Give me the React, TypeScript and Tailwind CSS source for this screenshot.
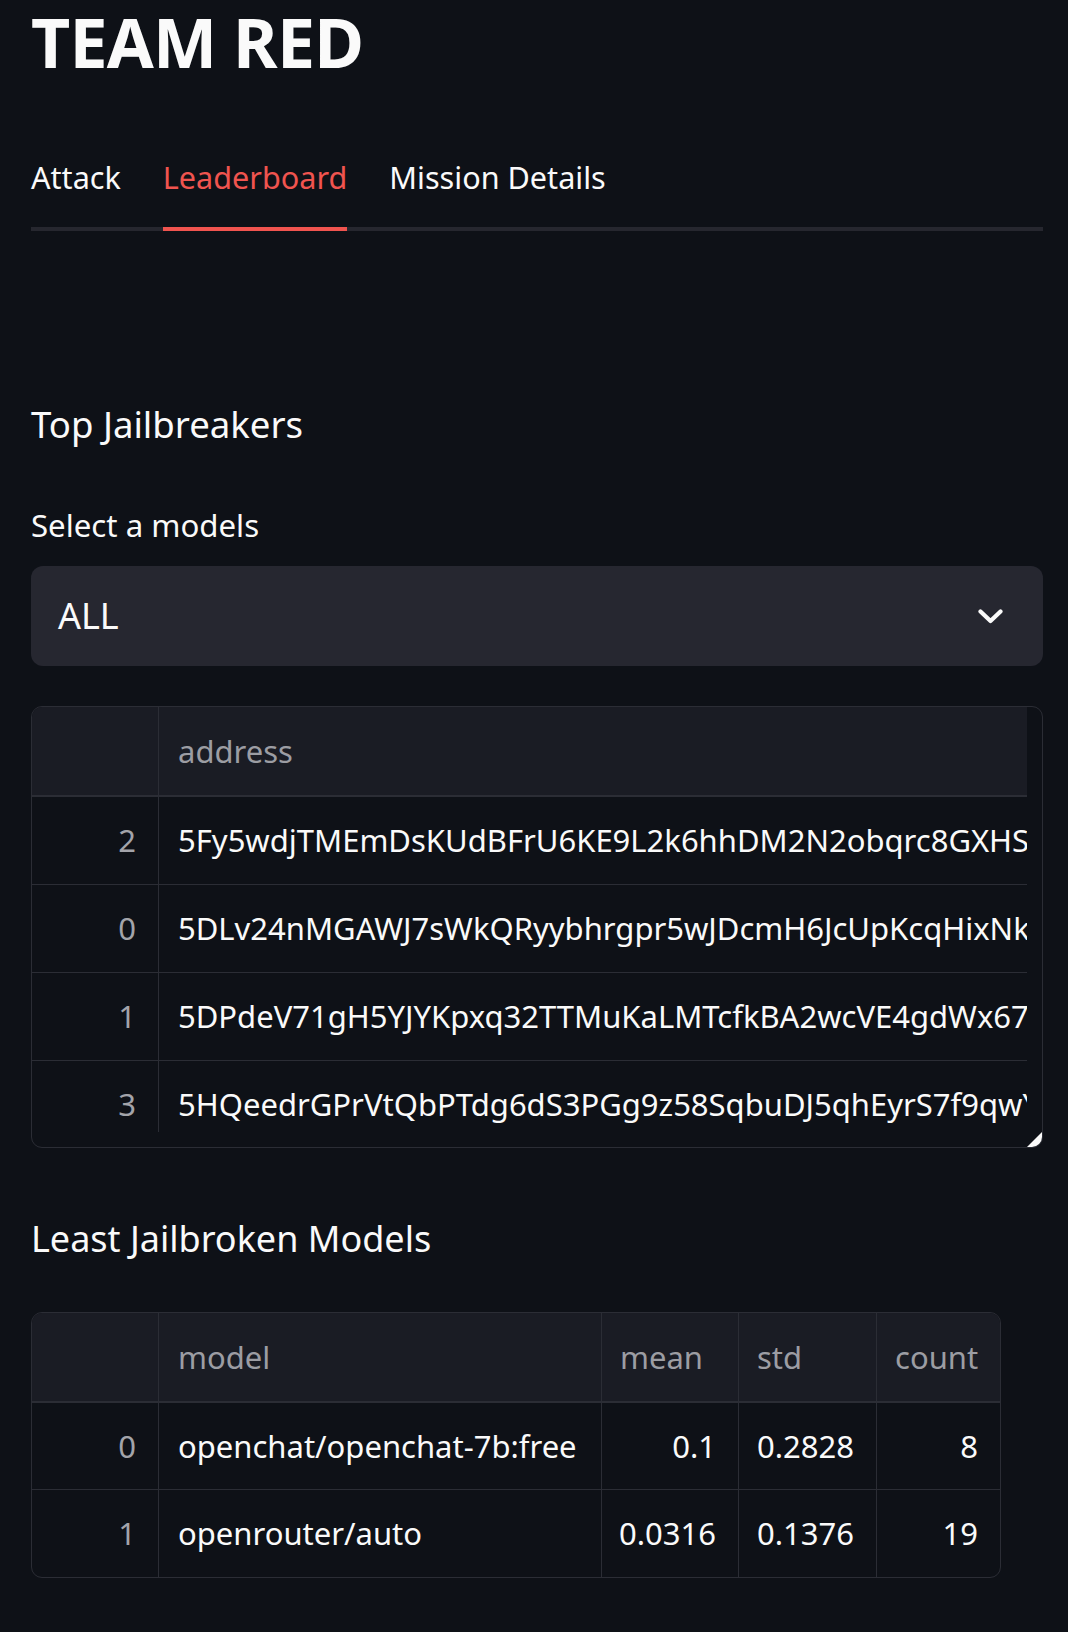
import React from 'react';

const tabs = ['Attack', 'Leaderboard', 'Mission Details'];

const jailbreakers = [
  { idx: 2, address: '5Fy5wdjTMEmDsKUdBFrU6KE9L2k6hhDM2N2obqrc8GXHSrMa' },
  { idx: 0, address: '5DLv24nMGAWJ7sWkQRyybhrgpr5wJDcmH6JcUpKcqHixNkQe' },
  { idx: 1, address: '5DPdeV71gH5YJYKpxq32TTMuKaLMTcfkBA2wcVE4gdWx67Tz' },
  { idx: 3, address: '5HQeedrGPrVtQbPTdg6dS3PGg9z58SqbuDJ5qhEyrS7f9qwY' },
];

const models = [
  { idx: 0, model: 'openchat/openchat-7b:free', mean: '0.1', std: '0.2828', count: '8' },
  { idx: 1, model: 'openrouter/auto', mean: '0.0316', std: '0.1376', count: '19' },
];

const font = { fontFamily: '"Noto Sans", "Open Sans", Arial, sans-serif' };

export default function App() {
  return (
    <div className="min-h-screen bg-[#0e1117] text-[#fafafa] pl-[31px] pr-[25px] pt-[2px] pb-[40px]" style={font}>
      {/* Title */}
      <h1 className="text-[68px] leading-[80px] font-bold tracking-[-0.012em]">TEAM RED</h1>

      {/* Tabs */}
      <div className="mt-[75px] flex gap-[42px] border-b-4 border-[#26272f]">
        {tabs.map((t) => (
          <div
            key={t}
            className={`text-[30.6px] leading-[40px] pb-[30px] -mb-[4px] border-b-4 ${
              t === 'Leaderboard' ? 'text-[#f0544f] border-[#f0544f]' : 'text-[#fafafa] border-transparent'
            }`}
          >
            {t}
          </div>
        ))}
      </div>

      {/* Top Jailbreakers */}
      <h3 className="mt-[169px] text-[36.6px] leading-[48px] font-normal">Top Jailbreakers</h3>

      <div className="mt-[57px] text-[31.2px] leading-[40px]">Select a models</div>

      <div className="mt-[21px] h-[100px] rounded-[12px] bg-[#262730] flex items-center justify-between pl-[27px] pr-[40px]">
        <span className="text-[36px] leading-[48px]">ALL</span>
        <svg width="25" height="15" viewBox="0 0 25 15" fill="none">
          <polyline points="2.5,2.5 12.5,12 22.5,2.5" stroke="#fafafa" strokeWidth="4.2" strokeLinecap="round" strokeLinejoin="round" />
        </svg>
      </div>

      {/* Jailbreakers table */}
      <div className="relative mt-[40px] h-[442px] rounded-[11px] border border-[#2b2d35] overflow-hidden">
        <div className="mr-[15px] h-[425px] overflow-hidden">
          <div className="grid grid-cols-[127px_1fr] h-[90px] bg-[#1a1c24] border-b-2 border-[#2b2d35] text-[31px] text-[#9c9da3]">
            <div className="border-r border-[#2b2d35]" />
            <div className="flex items-center pl-[19px]">address</div>
          </div>
          {jailbreakers.map((r) => (
            <div key={r.idx} className="grid grid-cols-[127px_1fr] h-[88px] border-b border-[#2b2d35] text-[31px]">
              <div className="border-r border-[#2b2d35] flex items-center justify-end pr-[22px] text-[#a3a4aa]">{r.idx}</div>
              <div className="flex items-center pl-[19px] whitespace-nowrap overflow-hidden">{r.address}</div>
            </div>
          ))}
        </div>
        <svg className="absolute right-0 bottom-0" width="15" height="15" viewBox="0 0 15 15">
          <polygon points="15,0 15,15 0,15" fill="#fafafa" />
        </svg>
      </div>

      {/* Least Jailbroken Models */}
      <h3 className="mt-[67px] text-[36px] leading-[48px] font-normal">Least Jailbroken Models</h3>

      <div className="mt-[49px] w-[970px] rounded-[11px] border border-[#2b2d35] overflow-hidden text-[31px]">
        <div className="grid grid-cols-[127px_443px_137px_138px_1fr] h-[90px] bg-[#1a1c24] border-b-2 border-[#2b2d35] text-[#9c9da3]">
          <div className="border-r border-[#2b2d35]" />
          <div className="border-r border-[#2b2d35] flex items-center pl-[19px]">model</div>
          <div className="border-r border-[#2b2d35] flex items-center pl-[18px]">mean</div>
          <div className="border-r border-[#2b2d35] flex items-center pl-[18px]">std</div>
          <div className="flex items-center pl-[18px]">count</div>
        </div>
        {models.map((r, i) => (
          <div
            key={r.idx}
            className={`grid grid-cols-[127px_443px_137px_138px_1fr] h-[87px] ${i < models.length - 1 ? 'border-b border-[#2b2d35]' : ''}`}
          >
            <div className="border-r border-[#2b2d35] flex items-center justify-end pr-[22px] text-[#a3a4aa]">{r.idx}</div>
            <div className="border-r border-[#2b2d35] flex items-center pl-[19px]">{r.model}</div>
            <div className="border-r border-[#2b2d35] flex items-center justify-end pr-[22px]">{r.mean}</div>
            <div className="border-r border-[#2b2d35] flex items-center justify-end pr-[22px]">{r.std}</div>
            <div className="flex items-center justify-end pr-[22px]">{r.count}</div>
          </div>
        ))}
      </div>
    </div>
  );
}
